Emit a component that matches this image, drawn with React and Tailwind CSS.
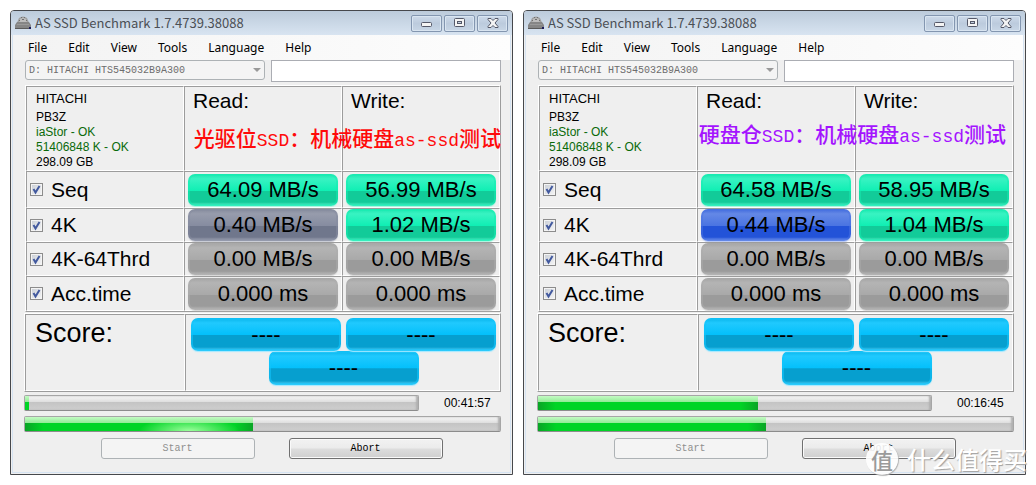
import { useState } from 'react';

const menu = ['File', 'Edit', 'View', 'Tools', 'Language', 'Help'];

const pillColors = {
  green:
    'border-[#14eeb2]/50 bg-[linear-gradient(to_bottom,#1ce6ae,#38f3c2_15%,#10efb4_52%,#12cb99_54%,#12cb99_88%,#5ff5cf)] shadow-[0_1px_1px_#a5f5de]',
  slate:
    'border-[#868ca0]/50 bg-[linear-gradient(to_bottom,#858b9c,#979cac_15%,#868ca0_52%,#70778c_54%,#70778c_88%,#a9aebc)] shadow-[0_1px_1px_#c5c8d2]',
  blue:
    'border-[#4a74e2]/50 bg-[linear-gradient(to_bottom,#3f69dd,#6488e6_15%,#4a74e2_52%,#2353d8_54%,#2353d8_88%,#84a2f0)] shadow-[0_1px_1px_#b3c5f5]',
  gray:
    'border-[#acacac]/50 bg-[linear-gradient(to_bottom,#a4a4a4,#b4b4b4_15%,#a9a9a9_52%,#9b9b9b_54%,#9b9b9b_88%,#bebebe)] shadow-[0_1px_1px_#d6d6d6]',
  sky:
    'border-[#12c4fc]/60 bg-[linear-gradient(to_bottom,#08b4ea,#20c9fe_15%,#04c0fb_50%,#069fcf_52%,#069fcf_88%,#5ad8ff)] shadow-[0_1px_1px_#a5e8ff]',
};

const windows = [
  {
    id: 'bay',
    note: ['光驱位', 'SSD', '：机械硬盘', 'as-ssd', '测试'],
    noteClass: 'text-[#ff0a0a] right-[11px] top-[114px]',
    rows: [
      { name: 'Seq', height: 'h-[37px]', read: '64.09 MB/s', write: '56.99 MB/s', readColor: 'green', writeColor: 'green' },
      { name: '4K', height: 'h-[34px]', read: '0.40 MB/s', write: '1.02 MB/s', readColor: 'slate', writeColor: 'green' },
      { name: '4K-64Thrd', height: 'h-[34px]', read: '0.00 MB/s', write: '0.00 MB/s', readColor: 'gray', writeColor: 'gray' },
      { name: 'Acc.time', height: 'h-[35px]', read: '0.000 ms', write: '0.000 ms', readColor: 'gray', writeColor: 'gray' },
    ],
    step: 1,
    total: 48,
    glow: true,
    time: '00:41:57',
  },
  {
    id: 'main',
    note: ['硬盘仓', 'SSD', '：机械硬盘', 'as-ssd', '测试'],
    noteClass: 'text-[#a414ff] right-[19px] top-[110px]',
    rows: [
      { name: 'Seq', height: 'h-[37px]', read: '64.58 MB/s', write: '58.95 MB/s', readColor: 'green', writeColor: 'green' },
      { name: '4K', height: 'h-[34px]', read: '0.44 MB/s', write: '1.04 MB/s', readColor: 'blue', writeColor: 'green' },
      { name: '4K-64Thrd', height: 'h-[34px]', read: '0.00 MB/s', write: '0.00 MB/s', readColor: 'gray', writeColor: 'gray' },
      { name: 'Acc.time', height: 'h-[35px]', read: '0.000 ms', write: '0.000 ms', readColor: 'gray', writeColor: 'gray' },
    ],
    step: 56,
    total: 48,
    glow: false,
    time: '00:16:45',
  },
];

const cell = 'border border-t-[#9c9c9c] border-l-[#9c9c9c] border-r-white border-b-white';
const panel = 'border border-t-white border-l-white border-r-[#9c9c9c] border-b-[#9c9c9c]';

function DriveIcon() {
  return (
    <svg width="16" height="14" viewBox="0 0 16 14" aria-hidden="true">
      <path d="M4 2 Q8 -1 12 2 L15 9 H1 Z" fill="#a0a0a0" />
      <path d="M5 3 Q8 1 11 3 L12 7 H4 Z" fill="#bcbcbc" />
      <path d="M6 1h1v1H6z M9 1h1v1H9z M7 3h2v1H7z M4 4h1v1H4z M11 4h1v1h-1z" fill="#6f6f6f" />
      <path d="M0 9 L2 6 H14 L16 9 V13 H0 Z" fill="#868686" />
      <path d="M2 8h12v1H2z" fill="#9a9a9a" />
      <path d="M0 12h16v1H0z" fill="#5a5a5a" />
      <path d="M14 11h2v2h-2z" fill="#1d1d5c" />
    </svg>
  );
}

function CaptionButton({ label, children }) {
  return (
    <button
      type="button"
      aria-label={label}
      className="flex h-[17px] w-[31px] items-center justify-center rounded-[2px] border border-[#8396b0] bg-[linear-gradient(to_bottom,#cddaea,#bccbdd_50%,#c8d6e6)] shadow-[inset_0_0_0_1px_#d9e5f1]"
    >
      {children}
    </button>
  );
}

function TitleBar() {
  return (
    <header className="flex h-6 items-center rounded-t-[3px] bg-[linear-gradient(to_bottom,#bccbdb,#d8e4f1)] pl-1 pr-1">
      <DriveIcon />
      <h1 className="flex-1 pl-1 font-['Noto_Sans_CJK_SC',sans-serif] text-[13px] leading-6 text-[#4b4f55]">
        AS SSD Benchmark 1.7.4739.38088
      </h1>
      <div className="flex gap-[2px]">
        <CaptionButton label="Minimize">
          <svg width="12" height="12" viewBox="0 0 12 12">
            <rect x="0.5" y="5.5" width="10" height="4" rx="1" fill="#f4f4f4" stroke="#545868" />
          </svg>
        </CaptionButton>
        <CaptionButton label="Maximize">
          <svg width="12" height="12" viewBox="0 0 12 12">
            <rect x="0.5" y="1.5" width="10" height="8" rx="1" fill="#f4f4f4" stroke="#545868" />
            <rect x="3.5" y="4.5" width="4" height="2" fill="#c3d0e0" stroke="#545868" />
          </svg>
        </CaptionButton>
        <CaptionButton label="Close">
          <svg width="12" height="12" viewBox="0 0 12 12">
            <path
              d="M1 1.5h3l2 2 2-2h3v1L8 6l3 3.5v1H8l-2-2-2 2H1v-1L4 6 1 2.5z"
              fill="#f4f4f4"
              stroke="#545868"
              strokeLinejoin="round"
            />
          </svg>
        </CaptionButton>
      </div>
    </header>
  );
}

function MenuBar() {
  return (
    <nav className="flex h-[25px] items-center gap-[21px] bg-[linear-gradient(to_right,#f3f3f3,#fdfdfd)] pl-[15px] font-['Noto_Sans',sans-serif] text-[12px] text-black">
      {menu.map((item) => (
        <button key={item} type="button">
          {item}
        </button>
      ))}
    </nav>
  );
}

function Pill({ color, className, children }) {
  return (
    <div
      className={`flex items-center justify-center rounded-[7px] border-2 bg-origin-border text-[22px] leading-none text-black ${pillColors[color]} ${className}`}
    >
      {children}
    </div>
  );
}

function TestCheckbox({ id, label }) {
  const [checked, setChecked] = useState(true);

  return (
    <div className="flex items-center gap-2 pl-[3px]">
      <span className="grid h-[13px] w-[13px]">
        <input
          id={id}
          type="checkbox"
          checked={checked}
          onChange={(e) => setChecked(e.target.checked)}
          className="col-start-1 row-start-1 h-[13px] w-[13px] appearance-none border border-[#8c8c8c] bg-[linear-gradient(135deg,#c9ced6,#f6f6f6)] shadow-[inset_0_0_0_1px_#f4f4f4]"
        />
        {checked && (
          <svg className="pointer-events-none col-start-1 row-start-1" width="13" height="13" viewBox="0 0 13 13">
            <path d="M3.5 6 L5.5 9.5 L9.5 3" fill="none" stroke="#42599e" strokeWidth="2" />
          </svg>
        )}
      </span>
      <label htmlFor={id} className="text-[21px] leading-6">
        {label}
      </label>
    </div>
  );
}

function ResultsTable({ id, rows }) {
  return (
    <table className={`ml-px table-fixed border-separate border-spacing-0 ${panel} w-[calc(100%-1px)]`}>
      <thead>
        <tr className="h-[84px] text-left align-top font-normal">
          <td className={`${cell} pl-[9px] pt-1 text-[12px] leading-[15px]`}>
            <p className="pb-1 text-[13px]">HITACHI</p>
            <p>PB3Z</p>
            <p className="text-[#0a6a0a]">iaStor - OK</p>
            <p className="text-[#0a6a0a]">51406848 K - OK</p>
            <p>298.09 GB</p>
          </td>
          <th scope="col" className={`${cell} pl-2 pt-[2px] text-[21px] font-normal leading-6`}>
            Read:
          </th>
          <th scope="col" className={`${cell} pl-2 pt-[2px] text-[21px] font-normal leading-6`}>
            Write:
          </th>
        </tr>
      </thead>
      <tbody>
        {rows.map((row) => (
          <tr key={row.name} className={row.height}>
            <th scope="row" className={`${cell} p-0 text-left font-normal`}>
              <TestCheckbox id={`${id}-${row.name}`} label={row.name} />
            </th>
            <td className={`${cell} px-[3px] py-0`}>
              <Pill color={row.readColor} className="h-8">{row.read}</Pill>
            </td>
            <td className={`${cell} px-[3px] py-0`}>
              <Pill color={row.writeColor} className="h-8">{row.write}</Pill>
            </td>
          </tr>
        ))}
      </tbody>
    </table>
  );
}

function ScorePanel() {
  return (
    <section className={`mt-px grid h-[79px] grid-cols-[160fr_315fr] ${panel}`}>
      <h2 className={`${cell} pl-[9px] text-[27px] leading-9`}>Score:</h2>
      <div className={`${cell} pl-[5px] pr-[3px] pt-[3px]`}>
        <div className="grid grid-cols-2 gap-[5px]">
          <Pill color="sky" className="h-[33px]">----</Pill>
          <Pill color="sky" className="h-[33px]">----</Pill>
        </div>
        <Pill color="sky" className="mx-auto h-[34px] w-[150px]">----</Pill>
      </div>
    </section>
  );
}

function ProgressBar({ label, value, glow }) {
  return (
    <div
      role="progressbar"
      aria-label={label}
      aria-valuenow={value}
      className="h-4 flex-1 rounded-[2px] border border-[#a6a6a6] border-b-[#8c8c8c] bg-[linear-gradient(to_bottom,#f8f8f8,#dedede_42%,#c4c4c4_46%,#cfcfcf)] shadow-[inset_-2px_0_2px_#b0b0b0]"
    >
      <div
        className="h-full bg-[linear-gradient(to_bottom,#c4fbc4,#93eb97_42%,transparent_44%),linear-gradient(to_right,#0aa526,#00d426_8%,#00d426_92%,#0aa526)]"
        style={{ width: `${value}%` }}
      >
        {glow && <div className="h-full bg-[radial-gradient(22%_100%_at_72%_100%,#9bff9b,transparent)]" />}
      </div>
    </div>
  );
}

function BenchmarkWindow({ data }) {
  return (
    <article className="relative min-w-0 flex-1 rounded-t-[4px] border border-[#46484c] bg-[#efefef] font-['Liberation_Sans',Arial,sans-serif] text-black">
      <TitleBar />
      <div className="mx-px mb-px border border-t-0 border-[#d5e3f2]">
        <MenuBar />
        <div className="pb-[13px] pl-[11px] pr-[9px]">
          <div className="mb-[3px] grid grid-cols-[24fr_23fr] gap-[6px] pl-px">
            <div className="relative">
              <select
                disabled
                aria-label="Drive"
                className="block h-5 w-full appearance-none rounded-[3px] border border-[#adb2b5] bg-[#f4f4f4] px-[3px] font-['Liberation_Mono',monospace] text-[10px] text-[#6d6d6d] opacity-100"
              >
                <option>D: HITACHI HTS545032B9A300</option>
              </select>
              <svg className="pointer-events-none absolute right-1 top-2" width="8" height="5" viewBox="0 0 8 5">
                <path d="M0 0h8L4 4z" fill="#999" />
              </svg>
            </div>
            <input type="text" aria-label="Status" className="h-[22px] w-full border border-[#abadb3] bg-white px-1 text-[12px]" />
          </div>

          <ResultsTable id={data.id} rows={data.rows} />
          <ScorePanel />

          <div className="mt-[3px] flex items-center">
            <ProgressBar label="Step" value={data.step} />
            <time className="w-[82px] pl-[25px] text-[12px] leading-4">{data.time}</time>
          </div>
          <div className="mt-[5px] flex">
            <ProgressBar label="Total" value={data.total} glow={data.glow} />
          </div>

          <div className="mt-[6px] flex justify-center gap-[34px] pl-[18px] font-['Liberation_Mono',monospace] text-[10px]">
            <button
              type="button"
              disabled
              className="h-[21px] w-[154px] rounded-[3px] border border-[#adb2b5] bg-[#f4f4f4] text-[#8f8f8f]"
            >
              Start
            </button>
            <button
              type="button"
              className="h-[21px] w-[154px] rounded-[3px] border border-[#707070] bg-[linear-gradient(to_bottom,#f2f2f2,#ebebeb_48%,#dddddd_52%,#cfcfcf)] text-black shadow-[inset_0_0_0_1px_#fafafa]"
            >
              Abort
            </button>
          </div>
        </div>
      </div>

      <p
        className={`absolute flex items-baseline whitespace-nowrap font-['Noto_Sans_CJK_SC',sans-serif] text-[21px] font-medium leading-6 ${data.noteClass}`}
      >
        {data.note.map((part, i) => (
          <span key={part} className={i % 2 ? "font-['Liberation_Mono',monospace] text-[18px]" : ''}>
            {part}
          </span>
        ))}
      </p>
    </article>
  );
}

function Watermark() {
  return (
    <div className="pointer-events-none absolute bottom-[10px] right-[9px] flex items-center gap-[9px] font-['Noto_Sans_CJK_SC',sans-serif] font-medium text-white">
      <span className="flex h-8 w-8 items-center justify-center rounded-full bg-white/90 text-[22px] leading-none text-[#9a9a9a] shadow-[1px_1px_1px_#b5b5b5]">
        值
      </span>
      <span className="text-[24px] leading-8 [text-shadow:1px_1px_1px_#a0a0a0]">什么值得买</span>
    </div>
  );
}

export default function App() {
  return (
    <main className="relative flex gap-[10px] bg-white p-[10px]">
      {windows.map((w) => (
        <BenchmarkWindow key={w.id} data={w} />
      ))}
      <Watermark />
    </main>
  );
}
